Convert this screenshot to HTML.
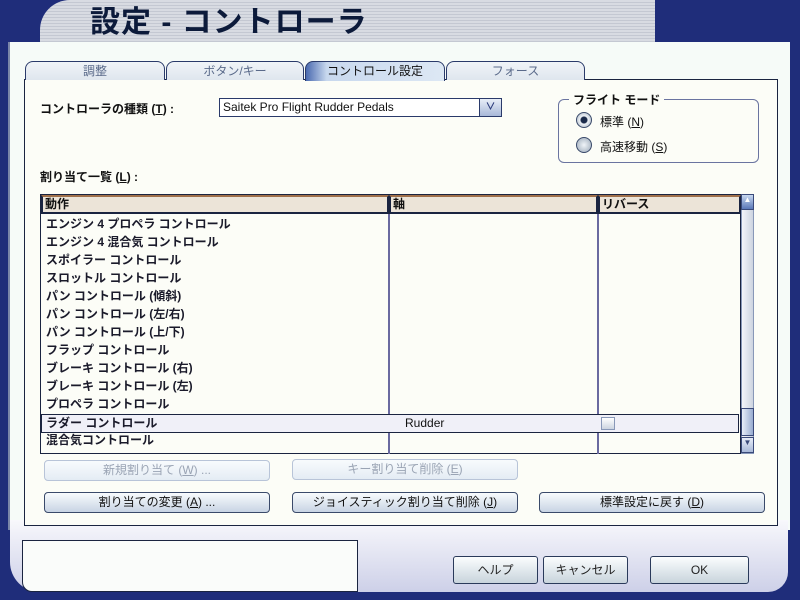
<!DOCTYPE html>
<html><head><meta charset="utf-8"><style>
*{margin:0;padding:0;box-sizing:border-box}
body{width:800px;height:600px;overflow:hidden;background:#1f2d7a;font-family:"Liberation Sans","Noto Sans CJK JP",sans-serif;font-size:12px;color:#111;position:relative}
.abs{position:absolute}
.title{left:40px;top:0;width:615px;height:46px;background:repeating-linear-gradient(#d8dbe2 0 2px,#c4c8d2 2px 3px);border-radius:30px 0 0 0;overflow:hidden}
.title span{position:absolute;left:50px;top:6px;font-size:30px;line-height:34px;font-weight:bold;color:#0c1a3a;letter-spacing:1px}
.dlg{left:8px;top:42px;width:782px;height:503px;background:#f6fbf8;border-left:2px solid #7a86a8}
.panel{left:24px;top:79px;width:754px;height:447px;border:1px solid #1a2440;background:#fcfdf7}
.tab{top:61px;height:19px;border:1px solid #2a3a6a;border-bottom:none;border-radius:8px 8px 0 0;background:linear-gradient(#f0f4f8,#dfe6ee);text-align:center;color:#5a6a8a;font-size:12px;line-height:18px}
.tab.act{background:linear-gradient(90deg,#4a6ab0,#c8d8ee 15%,#dde8f4);color:#111;height:20px}
.combo{left:219px;top:98px;width:283px;height:19px;border:1px solid #2a3a6a;background:#fff;font-size:12px;line-height:17px;padding-left:3px}
.combo b{position:absolute;right:0;top:0;width:22px;height:17px;background:linear-gradient(#e8eef8,#a8b8d8);border-left:1px solid #2a3a6a;color:#2a3a7a;font-size:10px;text-align:center;line-height:17px}
.grp{left:558px;top:99px;width:201px;height:64px;border:1px solid #6a74a0;border-radius:6px}
.radio{width:16px;height:16px;border-radius:50%;border:1px solid #3a4a6a;background:radial-gradient(#f0f4f8,#9aa8b8)}
.tbl{left:40px;top:194px;width:701px;height:260px;border:1px solid #1a2440;background:#fcfdf7}
.hd{top:0;height:19px;background:#ece4d8;border:2px solid #1a2440;border-top-color:#a0704a;font-weight:bold;font-size:12px;line-height:15px;padding-left:2px}
.vl{top:19px;width:2px;height:240px;background:#6a6aa0}
.row{left:5px;font-size:12px;font-weight:bold;line-height:18px;height:18px;color:#1a1a2a}
.btn{height:21px;border:1px solid #3a4a6a;border-radius:4px;background:linear-gradient(#f8fbfd,#c8d4e4);text-align:center;font-size:12px;line-height:19px;color:#111}
.btn.dis{border-color:#b8c4d8;color:#9aa4b4;background:linear-gradient(#f8fbfd,#e4ecf4)}
.bb{height:28px;line-height:26px;border:1px solid #2a3a5a;border-radius:3px;background:linear-gradient(#fbfdfe,#c8d4dc);text-align:center;color:#222}
</style></head><body>
<div class="abs title"><span>設定 - コントローラ</span></div>
<div class="abs dlg"></div>
<div class="abs" style="left:0;top:530px;width:800px;height:70px;background:#1f2d7a"></div>
<div class="abs" style="left:10px;top:520px;width:778px;height:72px;background:linear-gradient(#f8f8fc,#cdd0e8);border-radius:0 0 20px 30px"></div>
<div class="abs" style="left:22px;top:540px;width:336px;height:52px;background:#fafcfa;border:1px solid #1a2440;border-radius:0 0 0 10px"></div>
<div class="abs bb" style="left:453px;top:556px;width:85px">ヘルプ</div>
<div class="abs bb" style="left:543px;top:556px;width:85px">キャンセル</div>
<div class="abs bb" style="left:650px;top:556px;width:99px">OK</div>

<div class="abs panel"></div>
<div class="abs tab" style="left:25px;width:140px">調整</div>
<div class="abs tab" style="left:166px;width:138px">ボタン/キー</div>
<div class="abs tab act" style="left:305px;width:140px">コントロール設定</div>
<div class="abs tab" style="left:446px;width:139px">フォース</div>

<div class="abs" style="left:40px;top:100px;font-weight:bold">コントローラの種類 (<u>T</u>) :</div>
<div class="abs combo">Saitek Pro Flight Rudder Pedals<b>∨</b></div>
<div class="abs grp"></div>
<div class="abs" style="left:569px;top:91px;background:#fcfdf7;padding:0 4px;font-weight:bold">フライト モード</div>
<div class="abs radio" style="left:576px;top:112px;background:radial-gradient(#1a2a4a 0 3px,#f0f4f8 4px,#9aa8b8)"></div>
<div class="abs" style="left:600px;top:113px">標準 (<u>N</u>)</div>
<div class="abs radio" style="left:576px;top:137px"></div>
<div class="abs" style="left:600px;top:138px">高速移動 (<u>S</u>)</div>
<div class="abs" style="left:40px;top:168px;font-weight:bold">割り当て一覧 (<u>L</u>) :</div>

<div class="abs tbl">
<div class="abs hd" style="left:0;width:348px">動作</div>
<div class="abs hd" style="left:348px;width:209px">軸</div>
<div class="abs hd" style="left:557px;width:143px">リバース</div>
<div class="abs vl" style="left:347px"></div>
<div class="abs vl" style="left:556px"></div>
<div class="abs" style="left:0;top:219px;width:698px;height:19px;background:#f0f0f8;border:1px solid #1a2440"></div>
<div class="abs" style="left:560px;top:222px;width:14px;height:13px;border:1px solid #8898b8;background:linear-gradient(#fff,#ccd4e0)"></div>
<div class="abs" style="left:364px;top:219px;line-height:18px">Rudder</div>
<div class="abs row" style="top:20px">エンジン 4 プロペラ コントロール</div>
<div class="abs row" style="top:38px">エンジン 4 混合気 コントロール</div>
<div class="abs row" style="top:56px">スポイラー コントロール</div>
<div class="abs row" style="top:74px">スロットル コントロール</div>
<div class="abs row" style="top:92px">パン コントロール (傾斜)</div>
<div class="abs row" style="top:110px">パン コントロール (左/右)</div>
<div class="abs row" style="top:128px">パン コントロール (上/下)</div>
<div class="abs row" style="top:146px">フラップ コントロール</div>
<div class="abs row" style="top:164px">ブレーキ コントロール (右)</div>
<div class="abs row" style="top:182px">ブレーキ コントロール (左)</div>
<div class="abs row" style="top:200px">プロペラ コントロール</div>
<div class="abs row" style="top:219px">ラダー コントロール</div>
<div class="abs row" style="top:236px">混合気コントロール</div>
</div>
<div class="abs" style="left:741px;top:194px;width:13px;height:260px;background:linear-gradient(90deg,#f4f6fa,#cdd4e0);border:1px solid #8898b8"></div>
<div class="abs" style="left:741px;top:194px;width:13px;height:16px;background:linear-gradient(#c8d8f0,#5a78b8);border:1px solid #3a4a7a;font-size:8px;text-align:center;color:#fff">▲</div>
<div class="abs" style="left:741px;top:408px;width:13px;height:28px;background:linear-gradient(90deg,#e8eef8,#98acd0);border:1px solid #3a4a7a"></div>
<div class="abs" style="left:741px;top:437px;width:13px;height:16px;background:linear-gradient(#e8eef8,#a8b8d8);border:1px solid #3a4a7a;font-size:8px;text-align:center;color:#3a4a7a">▼</div>

<div class="abs btn dis" style="left:44px;top:460px;width:226px">新規割り当て (<u>W</u>) ...</div>
<div class="abs btn dis" style="left:292px;top:459px;width:226px">キー割り当て削除 (<u>E</u>)</div>
<div class="abs btn" style="left:44px;top:492px;width:226px">割り当ての変更 (<u>A</u>) ...</div>
<div class="abs btn" style="left:292px;top:492px;width:226px">ジョイスティック割り当て削除 (<u>J</u>)</div>
<div class="abs btn" style="left:539px;top:492px;width:226px">標準設定に戻す (<u>D</u>)</div>
</body></html>
